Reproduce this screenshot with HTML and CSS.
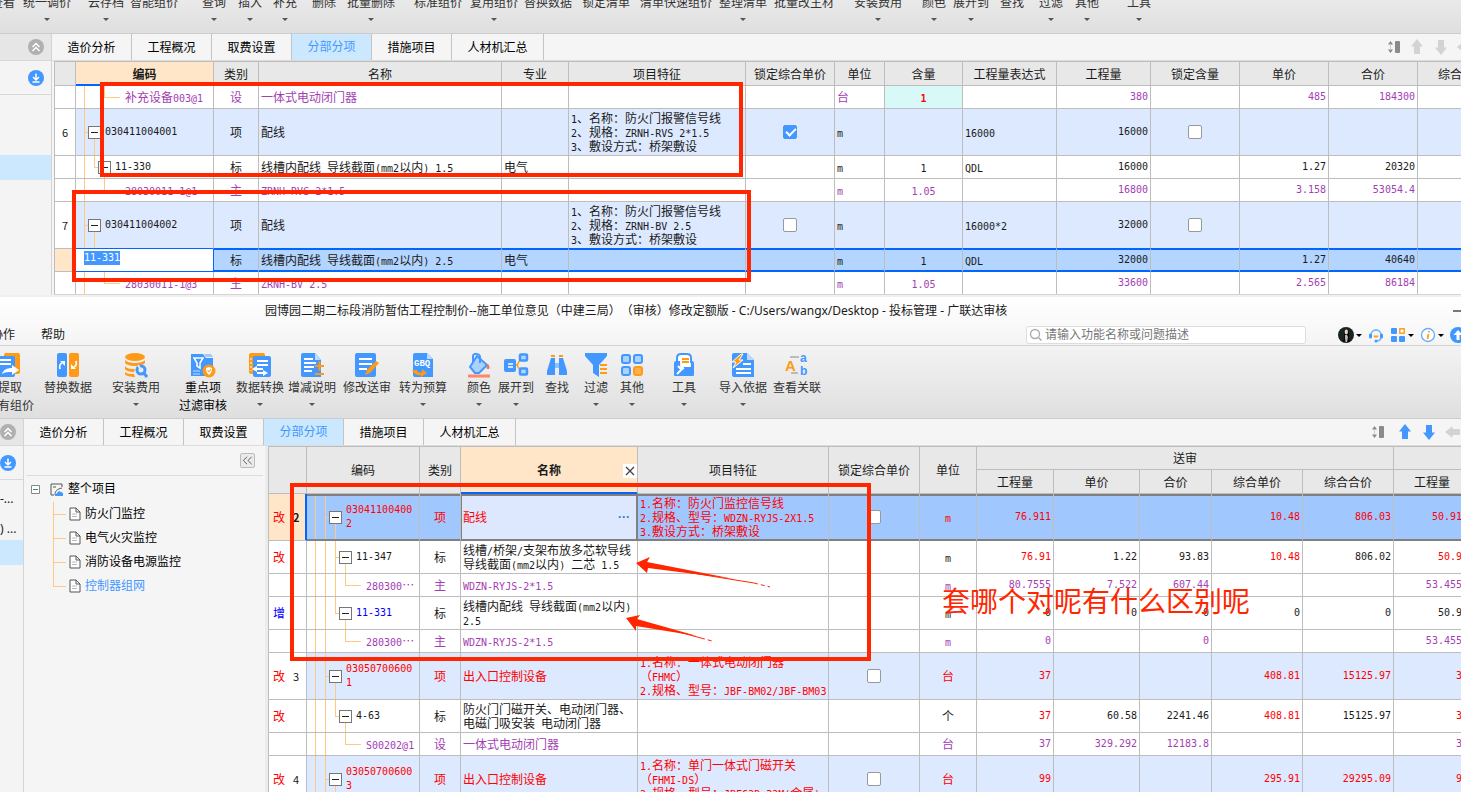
FILE: index.html
```html
<!DOCTYPE html>
<html lang="zh-CN">
<head>
<meta charset="utf-8">
<title>广联达审核</title>
<link rel="stylesheet" href="styles.css">
</head>
<body>
<svg class="defs" aria-hidden="true">
  <symbol id="up2" viewBox="0 0 16 16"><circle cx="8" cy="8" r="8" fill="#b0b0b0"/><path d="M4.500 8 8 4.500 11.500 8M4.500 12 8 8.500 11.500 12" fill="none" stroke="#fff" stroke-width="1.500"/></symbol>
  <symbol id="dl" viewBox="0 0 16 16"><circle cx="8" cy="8" r="8" fill="#4398ff"/><path d="M8 3.500v6M5 7l3 3 3-3M4.500 12h7" fill="none" stroke="#fff" stroke-width="1.500"/></symbol>
  <symbol id="space" viewBox="0 0 14 14"><path d="M3.500 1 6 4.500H1zM3.500 13 6 9.500H1z" fill="#888"/><path d="M3.500 4v6" stroke="#ccc"/><rect x="8" y="1" width="5" height="12" rx="1" fill="#8a8a8a"/></symbol>
  <symbol id="arrow" viewBox="0 0 16 16"><path d="M8 0 14 7.500 11 7.500V15H5V7.500L2 7.500z" fill="currentColor"/></symbol>
  <symbol id="doc" viewBox="0 0 12 14"><path d="M1 1h6l4 4v8H1z" fill="#fff" stroke="#555"/><path d="M7 1v4h4" fill="none" stroke="#555"/><path d="M3 7h5M3 9.500h5" stroke="#bbb"/></symbol>
</svg>

<section class="window">
  <nav class="ribbon ribbon-cut">
    <button>查看</button><button class="dd">统一调价</button><button class="dd">云存档</button><button>智能组价</button><button class="dd">查询</button><button class="dd">插入</button><button class="dd">补充</button><button>删除</button><button class="dd">批量删除</button><button>标准组价</button><button class="dd">复用组价</button><button>替换数据</button><button>锁定清单</button><button>清单快速组价</button><button class="dd">整理清单</button><button>批量改主材</button><button class="dd">安装费用</button><button class="dd">颜色</button><button class="dd">展开到</button><button>查找</button><button class="dd">过滤</button><button class="dd">其他</button><button class="dd">工具</button>
  </nav>
  <div class="work">
    <aside class="rail rail-wide">
      <button class="rail-head" aria-label="收起"><svg><use href="#up2"/></svg></button>
      <button class="rail-down" aria-label="下载"><svg><use href="#dl"/></svg></button>
      <div class="rail-sel"></div>
    </aside>
    <div class="main">
      <div class="tabs">
        <button>造价分析</button><button>工程概况</button><button>取费设置</button><button class="on">分部分项</button><button>措施项目</button><button class="last">人材机汇总</button>
        <div class="tools off"><svg class="sp"><use href="#space"/></svg><svg><use href="#arrow"/></svg><svg class="down"><use href="#arrow"/></svg><svg class="left"><use href="#arrow"/></svg></div>
      </div>
      <div class="sheet sheet-a">
        <table>
          <colgroup><col class="w21"><col class="w138"><col class="w45"><col class="w243"><col class="w67"><col class="w177"><col class="w89"><col class="w50"><col class="w78"><col class="w94"><col class="w94"><col class="w89"><col class="w89"><col class="w89"><col class="w89"></colgroup>
          <tr class="h24"><th></th><th class="act">编码</th><th>类别</th><th>名称</th><th>专业</th><th>项目特征</th><th>锁定综合单价</th><th>单位</th><th>含量</th><th>工程量表达式</th><th>工程量</th><th>锁定含量</th><th>单价</th><th>合价</th><th>综合单价</th></tr>
          <tr class="h23 pu"><td></td><td class="tree leaf">补充设备<code>003@1</code></td><td class="c">设</td><td>一体式电动闭门器</td><td></td><td></td><td></td><td>台</td><td class="c cyan"><code>1</code></td><td></td><td class="r">380</td><td></td><td class="r">485</td><td class="r">184300</td><td></td></tr>
          <tr class="h47 item"><td class="no">6</td><td class="tree top"><div><button class="box" aria-label="折叠"></button><code>030411004001</code></div></td><td class="c">项</td><td>配线</td><td></td><td><code>1</code>、名称：防火门报警信号线<br><code>2</code>、规格：<code>ZRNH-RVS 2*1.5</code><br><code>3</code>、敷设方式：桥架敷设</td><td class="c"><input type="checkbox" aria-label="锁定综合单价" checked></td><td><code>m</code></td><td></td><td><code>16000</code></td><td class="r">16000</td><td class="c"><input type="checkbox" aria-label="锁定含量"></td><td></td><td></td><td></td></tr>
          <tr class="h23"><td></td><td class="tree sub"><div><button class="box" aria-label="折叠"></button><code>11-330</code></div></td><td class="c">标</td><td>线槽内配线<code> </code>导线截面<code>(mm2</code>以内<code>) 1.5</code></td><td>电气</td><td></td><td></td><td><code>m</code></td><td class="c"><code>1</code></td><td><code>QDL</code></td><td class="r">16000</td><td></td><td class="r">1.27</td><td class="r">20320</td><td></td></tr>
          <tr class="h23 pu"><td></td><td class="tree leaf"><code>28030011-1@1</code></td><td class="c">主</td><td><code>ZRNH-RVS 2*1.5</code></td><td></td><td></td><td></td><td><code>m</code></td><td class="c"><code>1.05</code></td><td></td><td class="r">16800</td><td></td><td class="r">3.158</td><td class="r">53054.4</td><td></td></tr>
          <tr class="h47 item pre"><td class="no">7</td><td class="tree top"><div><button class="box" aria-label="折叠"></button><code>030411004002</code></div></td><td class="c">项</td><td>配线</td><td></td><td><code>1</code>、名称：防火门报警信号线<br><code>2</code>、规格：<code>ZRNH-BV 2.5</code><br><code>3</code>、敷设方式：桥架敷设</td><td class="c"><input type="checkbox" aria-label="锁定综合单价"></td><td><code>m</code></td><td></td><td><code>16000*2</code></td><td class="r">32000</td><td class="c"><input type="checkbox" aria-label="锁定含量"></td><td></td><td></td><td></td></tr>
          <tr class="h23 cur"><td class="mark"></td><td class="edit"><input type="text" value="11-331" aria-label="编码"></td><td class="c">标</td><td>线槽内配线<code> </code>导线截面<code>(mm2</code>以内<code>) 2.5</code></td><td>电气</td><td></td><td></td><td><code>m</code></td><td class="c"><code>1</code></td><td><code>QDL</code></td><td class="r">32000</td><td></td><td class="r">1.27</td><td class="r">40640</td><td></td></tr>
          <tr class="h22 pu"><td></td><td class="tree leaf"><code>28030011-1@3</code></td><td class="c">主</td><td><code>ZRNH-BV 2.5</code></td><td></td><td></td><td></td><td><code>m</code></td><td class="c"><code>1.05</code></td><td></td><td class="r">33600</td><td></td><td class="r">2.565</td><td class="r">86184</td><td></td></tr>
        </table>
      </div>
    </div>
  </div>
</section>

<section class="window second">
  <header class="title">
    <h1>园博园二期二标段消防暂估工程控制价--施工单位意见（中建三局）（审核）修改定额版 - C:/Users/wangx/Desktop - 投标管理 - 广联达审核</h1>
    <button class="min" aria-label="最小化"></button>
  </header>
  <div class="menu">
    <a href="#">协作</a><a href="#">帮助</a>
    <label class="search"><svg viewBox="0 0 14 14"><circle cx="6" cy="6" r="4.500" fill="none" stroke="#aaa" stroke-width="1.300"/><path d="m9.500 9.500 3 3" stroke="#aaa" stroke-width="1.500"/></svg><input type="text" placeholder="请输入功能名称或问题描述"></label>
    <div class="account">
      <button class="cr" aria-label="用户"><svg viewBox="0 0 16 16"><circle cx="8" cy="8" r="8" fill="#1c2421"/><path d="M6 5c0-3 5-3 5 0v5l1 5H5l1-5z" fill="#080a0a"/><ellipse cx="8.300" cy="5" rx="1.700" ry="2.400" fill="#e6d3c8"/><path d="M7 8h2l1 2-1 5H7.500L7 11z" fill="#bfb4ad"/></svg></button>
      <button aria-label="客服"><svg viewBox="0 0 16 16"><path d="M3 8a5 5 0 0 1 10 0M13 8v2c0 3-2 4-5 4" fill="none" stroke="#7dbbff" stroke-width="1.800"/><rect x="1" y="6.500" width="3" height="5" rx="1.500" fill="#4398ff"/><rect x="12" y="6.500" width="3" height="5" rx="1.500" fill="#4398ff"/><path d="M5.500 8.500h5c0 3-5 3-5 0z" fill="#ff9f1a"/><circle cx="8" cy="14" r="1.500" fill="#4398ff"/></svg></button>
      <button class="cr" aria-label="应用"><svg viewBox="0 0 16 16"><g fill="#4398ff"><rect x="1" y="1" width="6" height="6" rx="1"/><rect x="1" y="9" width="6" height="6" rx="1"/><rect x="9" y="9" width="6" height="6" rx="1"/></g><rect x="9.800" y="1.800" width="4.400" height="4.400" fill="#fff" stroke="#ff9f1a" stroke-width="1.500"/></svg></button>
      <button class="cr" aria-label="信息"><svg viewBox="0 0 16 16"><circle cx="8" cy="8" r="6.500" fill="#fff" stroke="#6aaeff" stroke-width="1.400"/><path d="M8.500 7 7.500 12M9 4l-.2 1.500" stroke="#ff9f1a" stroke-width="1.800"/></svg></button>
      <button aria-label="升级"><svg viewBox="0 0 16 16"><circle cx="8" cy="8" r="8" fill="#3f96ff"/><path d="M8 3 3.500 8H6.500v5h3V8h3z" fill="#fff"/></svg></button>
    </div>
  </div>
  <nav class="ribbon ribbon-full">
    <button><svg viewBox="0 0 24 24"><rect x="6" y="0" width="16" height="21" rx="2" fill="#ff9a16"/><rect x="-2" y="3" width="19" height="21" rx="2" fill="#4398ff"/><path d="M2 7h11M2 11h11" stroke="#fff" stroke-width="2"/><path d="M4 21c1-4 5-6 10-6v-3l7 5-7 5v-3c-4 0-7 0-10 2z" fill="#fff"/></svg><span>提取</span><span>已有组价</span></button>
    <button><svg viewBox="0 0 24 24"><rect x="1" width="10" height="24" rx="2" fill="#4398ff"/><rect x="13" width="10" height="24" rx="2" fill="#ff9a16"/><path d="M4 16c-1-4 0-5 2-6M20 8c1 4 0 5-2 6" fill="none" stroke="#fff" stroke-width="1.800"/><path d="m4 8 5 0 0 5zM20 16l-5 0 0-5z" fill="#fff"/></svg><span>替换数据</span></button>
    <button class="dd"><svg viewBox="0 0 24 24"><g fill="#ff9a16"><ellipse cx="11" cy="4" rx="10" ry="4"/><path d="M1 7c3 4 17 4 20 0v3c-3 4-17 4-20 0zM1 13c2 3 6 3 10 3l-1 3c-4 0-8-1-9-3zM1 19c2 2 5 2 9 2l1 3c-4 0-10-1-10-3z"/></g><circle cx="17" cy="17" r="4" fill="none" stroke="#4398ff" stroke-width="3"/><path d="m17 17-3-5" stroke="#e8e8e8" stroke-width="2"/><path d="m19 19 4 5" stroke="#4398ff" stroke-width="3"/></svg><span>安装费用</span></button>
    <button class="dark"><svg viewBox="0 0 24 24"><path d="M0 1h12l3 4h7v18H0z" fill="#4398ff"/><path d="M13 1h7l2 3h-7z" fill="#9bcbff"/><path d="M3 5h9L9 10v5l-3-2v-3z" fill="none" stroke="#fff" stroke-width="1.500"/><path d="M2 18h7M2 21h7" stroke="#bcdcff"/><circle cx="18" cy="18" r="6.500" fill="#ff9a16"/><path d="m18 14 3 1c0 4-1 5-3 7-2-2-3-3-3-7z" fill="#fff"/><path d="m16.500 17 1.500 2 2-3" fill="none" stroke="#ff9a16"/></svg><span>重点项</span><span>过滤审核</span></button>
    <button class="dd"><svg viewBox="0 0 24 24"><rect x="1" width="16" height="21" rx="2" fill="#ff9a16"/><rect x="5" y="3" width="18" height="21" rx="2" fill="#4398ff"/><path d="M3 5v13" stroke="#fff" stroke-dasharray="2 2"/><path d="M9 8h11M9 12h11" stroke="#fff" stroke-width="2"/><path d="m4 16 5-3v2h6v2H9v2zM20 20l-5-3v2H9v2h6v2z" fill="#fff"/></svg><span>数据转换</span></button>
    <button class="dd"><svg viewBox="0 0 24 24"><path d="M1 2a2 2 0 0 1 2-2h12l6 7v17H3a2 2 0 0 1-2-2z" fill="#4398ff"/><path d="M15 0v7h6z" fill="#b9dbff"/><path d="M4 6h9M4 10h12M4 14h10M4 18h8" stroke="#fff" stroke-width="1.800"/><path d="M15 13h9M19.500 8.500v9M15 21h9" stroke="#ff9a16" stroke-width="2"/></svg><span>增减说明</span></button>
    <button><svg viewBox="0 0 24 24"><rect width="21" height="24" rx="2" fill="#4398ff"/><path d="M4 6h13M4 11h13M4 16h8" stroke="#fff" stroke-width="2.200"/><path d="m12 17 9-9 3 2-9 10-5 2z" fill="#ff9a16"/></svg><span>修改送审</span></button>
    <button class="dd"><svg viewBox="0 0 24 24"><path d="M2 2a2 2 0 0 1 2-2h12l6 6v18H4a2 2 0 0 1-2-2z" fill="#4398ff"/><path d="M16 0v6h6z" fill="#b9dbff"/><text x="3" y="13" class="gbq">GBQ</text><path d="M1 17h5c1 3 3 3 5 2v-3l5 4-6 4v-2c-4 1-7-1-9-5z" fill="#ff9a16"/></svg><span>转为预算</span></button>
    <button class="dd"><svg viewBox="0 0 24 24"><path d="m10 3 10 9-8 8H8l-5-6z" fill="#a9d2ff" stroke="#4398ff" stroke-width="2"/><path d="M6 9V3c0-3 7-3 7 1v6" fill="none" stroke="#4398ff" stroke-width="2"/><path d="M21 11c2 3 2 5 0 5s-2-2 0-5z" fill="#ff7052"/><path d="M1 23h22" stroke="#ff8668" stroke-width="3"/></svg><span>颜色</span></button>
    <button class="dd"><svg viewBox="0 0 24 24"><path d="M10 12h3l4-7M13 12l4 7" fill="none" stroke="#ff9a16" stroke-width="1.500"/><rect x="0" y="6" width="12" height="13" rx="2" fill="#4398ff"/><path d="M4 11h5M4 14h5" stroke="#fff" stroke-width="1.500"/><g fill="#b4d7ff" stroke="#4398ff" stroke-width="2.500"><rect x="16" y="1.500" width="7" height="6" rx="1"/><rect x="16" y="15.500" width="7" height="6" rx="1"/></g></svg><span>展开到</span></button>
    <button><svg viewBox="0 0 24 24"><path d="M6 3h4M14 3h4" stroke="#ff9a16" stroke-width="2"/><path d="M6 5h4v17H2v-4zM14 5h4l4 13v4h-8z" fill="#4398ff"/><path d="M10 10h4v5h-4z" fill="#8fc3ff"/></svg><span>查找</span></button>
    <button class="dd"><svg viewBox="0 0 24 24"><path d="M1 0h22v3l-8 9v12l-6-4v-8L1 3z" fill="#4398ff"/><path d="M16 12h7M16 16h7M16 20h7" stroke="#ff9a16" stroke-width="2"/></svg><span>过滤</span></button>
    <button class="dd"><svg viewBox="0 0 24 24"><g fill="#a9d2ff" stroke="#4398ff" stroke-width="2"><rect x="2" y="2" width="8" height="8" rx="2"/><rect x="14" y="2" width="8" height="8" rx="2"/><rect x="2" y="14" width="8" height="8" rx="2"/></g><rect x="14" y="14" width="8" height="8" rx="2" fill="#ffb04d" stroke="#ff9a16" stroke-width="2"/></svg><span>其他</span></button>
    <button class="dd"><svg viewBox="0 0 24 24"><path d="M5 9V5q0-4 4-4h6q4 0 4 4v5" fill="#fff" stroke="#4398ff" stroke-width="2"/><path d="M4 8h4v6h11v-6h1q2 0 2 2v12q0 1-1 1H3q-1 0-1-1V10q0-2 2-2z" fill="#4398ff"/><path d="M9 4h9v10H9z" fill="#fff"/><path d="M10 6h7M10 9h7" stroke="#ff9a16" stroke-width="1.800"/><path d="M10 12v4l-5 5M6 13l3 3 3-1" stroke="#fff" stroke-width="2" fill="none"/></svg><span>工具</span></button>
    <button class="dd"><svg viewBox="0 0 24 24"><path d="M1 2a2 2 0 0 1 2-2h13l7 7v17H3a2 2 0 0 1-2-2z" fill="#4398ff"/><path d="M16 0v7h7z" fill="#b9dbff"/><path d="M12 11h8M5 16h15M5 20h15" stroke="#fff" stroke-width="2"/><path d="m10 1-9 8h4l-3 6 10-8H8l4-6z" fill="#ff9a16" stroke="#fff"/></svg><span>导入依据</span></button>
    <button><svg viewBox="0 0 24 24"><text x="0" y="18" class="la">A</text><text x="15" y="9" class="lb">a</text><text x="15" y="22" class="lb">b</text><path d="M6 5V4h8M6 20h7" fill="none" stroke="#aaa" stroke-width="1.500"/></svg><span>查看关联</span></button>
  </nav>
  <div class="work">
    <aside class="rail rail-thin">
      <button class="rail-head" aria-label="收起"><svg><use href="#up2"/></svg></button>
      <button class="rail-down" aria-label="下载"><svg><use href="#dl"/></svg></button>
      <div class="rail-item">-...</div><div class="rail-item">) ...</div>
      <div class="rail-sel"></div>
    </aside>
    <div class="main">
      <div class="tabs">
        <button>造价分析</button><button>工程概况</button><button>取费设置</button><button class="on">分部分项</button><button>措施项目</button><button class="last">人材机汇总</button>
        <div class="tools live"><svg class="sp"><use href="#space"/></svg><svg><use href="#arrow"/></svg><svg class="down"><use href="#arrow"/></svg><svg class="left dim"><use href="#arrow"/></svg></div>
      </div>
      <div class="split">
        <div class="outline">
          <div class="outline-bar"><button aria-label="收起目录"><svg viewBox="0 0 14 14"><path d="m6.500 3-4 4 4 4M11.500 3l-4 4 4 4" fill="none" stroke="#555"/></svg></button></div>
          <div class="root"><svg class="pm" viewBox="0 0 9 9"><path d="M.5.500h8v8h-8z" fill="#fff" stroke="#888"/><path d="M2 4.500h5" stroke="#389"/></svg><svg class="pj" viewBox="0 0 13 13"><path d="M12 4V1H1v11h3M3 4h3M5 12c0-4 2-6 7-7" fill="none" stroke="#555"/><path d="m5 12 4-4 4 2v3H5z" fill="#4398ff"/></svg><a href="#">整个项目</a></div>
          <ul>
            <li><svg><use href="#doc"/></svg><a href="#">防火门监控</a></li>
            <li><svg><use href="#doc"/></svg><a href="#">电气火灾监控</a></li>
            <li><svg><use href="#doc"/></svg><a href="#">消防设备电源监控</a></li>
            <li><svg><use href="#doc"/></svg><a href="#" class="on">控制器组网</a></li>
          </ul>
        </div>
        <div class="sheet sheet-b">
          <table>
            <colgroup><col class="w38"><col class="w113"><col class="w41"><col class="w177"><col class="w191"><col class="w91"><col class="w57"><col class="w77"><col class="w86"><col class="w72"><col class="w91"><col class="w91"><col class="w77"><col class="w86"></colgroup>
            <tr class="h23"><th rowspan="2"></th><th rowspan="2">编码</th><th rowspan="2">类别</th><th rowspan="2" class="act">名称<button aria-label="关闭"><svg viewBox="0 0 14 14"><path d="m3 3 8 8M11 3l-8 8" stroke="#444" stroke-width="1.300"/></svg></button></th><th rowspan="2">项目特征</th><th rowspan="2">锁定综合单价</th><th rowspan="2">单位</th><th colspan="5">送审</th><th colspan="2"></th></tr>
            <tr class="h24"><th>工程量</th><th>单价</th><th>合价</th><th>综合单价</th><th>综合合价</th><th>工程量</th><th>单价</th></tr>
            <tr class="h47 pick red"><td class="no mark"><div>改<b>2</b></div></td><td class="tree top"><div><button class="box" aria-label="折叠"></button><code>03041100400<br>2</code></div></td><td class="c">项</td><td class="cell"><div>配线<button aria-label="更多">···</button></div></td><td><code>1.</code>名称：防火门监控信号线<br><code>2.</code>规格、型号：<code>WDZN-RYJS-2X1.5</code><br><code>3.</code>敷设方式：桥架敷设</td><td class="c"><input type="checkbox" aria-label="锁定综合单价"></td><td class="c"><code>m</code></td><td class="r">76.911</td><td></td><td></td><td class="r">10.48</td><td class="r">806.03</td><td class="r">50.911</td><td></td></tr>
            <tr class="h33"><td class="no"><div class="rd">改</div></td><td class="tree sub cont"><div><button class="box" aria-label="折叠"></button><code>11-347</code></div></td><td class="c">标</td><td>线槽<code>/</code>桥架<code>/</code>支架布放多芯软导线<br>导线截面<code>(mm2</code>以内<code>) </code>二芯<code> 1.5</code></td><td></td><td></td><td class="c"><code>m</code></td><td class="r rd">76.91</td><td class="r">1.22</td><td class="r">93.83</td><td class="r rd">10.48</td><td class="r">806.02</td><td class="r rd">50.91</td><td></td></tr>
            <tr class="h23 pu"><td></td><td class="tree leaf cont"><code>280300</code>⋯</td><td class="c">主</td><td><code>WDZN-RYJS-2*1.5</code></td><td></td><td></td><td class="c"><code>m</code></td><td class="r">80.7555</td><td class="r">7.522</td><td class="r">607.44</td><td></td><td></td><td class="r">53.4555</td><td></td></tr>
            <tr class="h33"><td class="no"><div class="bl">增</div></td><td class="tree sub"><div><button class="box" aria-label="折叠"></button><code class="bl">11-331</code></div></td><td class="c">标</td><td>线槽内配线<code> </code>导线截面<code>(mm2</code>以内<code>)</code><br><code>2.5</code></td><td></td><td></td><td class="c"><code>m</code></td><td class="r">0</td><td class="r">0</td><td class="r">0</td><td class="r">0</td><td class="r">0</td><td class="r">50.91</td><td></td></tr>
            <tr class="h23 pu"><td></td><td class="tree leaf"><code>280300</code>⋯</td><td class="c">主</td><td><code>WDZN-RYJS-2*1.5</code></td><td></td><td></td><td class="c"><code>m</code></td><td class="r">0</td><td></td><td class="r">0</td><td></td><td></td><td class="r">53.4555</td><td></td></tr>
            <tr class="h47 item red"><td class="no"><div>改<b>3</b></div></td><td class="tree top"><div><button class="box" aria-label="折叠"></button><code>03050700600<br>1</code></div></td><td class="c">项</td><td>出入口控制设备</td><td><code>1.</code>名称：一体式电动闭门器<br>（<code>FHMC</code>）<br><code>2.</code>规格、型号：<code>JBF-BM02/JBF-BM03</code></td><td class="c"><input type="checkbox" aria-label="锁定综合单价"></td><td class="c">台</td><td class="r">37</td><td></td><td></td><td class="r">408.81</td><td class="r">15125.97</td><td class="r">37</td><td></td></tr>
            <tr class="h33"><td class="no"><div class="rd">改</div></td><td class="tree sub"><div><button class="box" aria-label="折叠"></button><code>4-63</code></div></td><td class="c">标</td><td>防火门门磁开关、电动闭门器、<br>电磁门吸安装<code> </code>电动闭门器</td><td></td><td></td><td class="c">个</td><td class="r rd">37</td><td class="r">60.58</td><td class="r">2241.46</td><td class="r rd">408.81</td><td class="r">15125.97</td><td class="r rd">37</td><td></td></tr>
            <tr class="h23 pu"><td></td><td class="tree leaf"><code>S00202@1</code></td><td class="c">设</td><td>一体式电动闭门器</td><td></td><td></td><td class="c">台</td><td class="r">37</td><td class="r">329.292</td><td class="r">12183.8</td><td></td><td></td><td class="r">37</td><td></td></tr>
            <tr class="h47 item red"><td class="no"><div>改<b>4</b></div></td><td class="tree top"><div><button class="box" aria-label="折叠"></button><code>03050700600<br>3</code></div></td><td class="c">项</td><td>出入口控制设备</td><td><code>1.</code>名称：单门一体式门磁开关<br>（<code>FHMI-DS</code>）<br><code>2.</code>规格、型号：<code>JBF62D-32M(</code>金属<code>)</code></td><td class="c"><input type="checkbox" aria-label="锁定综合单价"></td><td class="c">台</td><td class="r">99</td><td></td><td></td><td class="r">295.91</td><td class="r">29295.09</td><td class="r">99</td><td></td></tr>
          </table>
        </div>
      </div>
    </div>
  </div>
</section>

<div class="note note-a"></div>
<div class="note note-b"></div>
<div class="note note-c"></div>
<svg class="pointers" viewBox="0 0 150 90" aria-hidden="true">
  <g fill="#ff2600"><path d="M10 8 24 2l-3 5L108 24 22 13l-1 5z"/><path d="M0 63 14 60l-3 4 60 17L10 71l0 5z"/></g>
  <path d="m60 17 68 11M45 75l30 8" stroke="#ff2600"/>
  <path d="m128 28 16 4M75 83l11 3" stroke="#ff2600" stroke-dasharray="4 3"/>
</svg>
<p class="remark">套哪个对呢有什么区别呢</p>
</body>
</html>
```
FILE: styles.css
```css
* { box-sizing: border-box; }
body {
  margin: 0; position: relative; height: 100vh; overflow: hidden;
  display: flex; flex-direction: column;
  background: #f5f5f5; color: #1a1a1a;
  font: 12px/14px "Noto Sans", "Noto Sans CJK SC", sans-serif;
  text-spacing-trim: space-all;
}
button { border: 0; padding: 0; margin: 0; background: none; font: inherit; color: inherit; }
a { color: inherit; text-decoration: none; }
svg { display: block; flex: none; }
.defs { position: absolute; width: 0; height: 0; }
.window { display: flex; flex-direction: column; flex: none; }
.second { flex: 1; min-height: 0; border-top: 2px solid #f0f0f0; }

/* ribbons */
.ribbon {
  display: grid; flex: none; align-items: start; overflow: hidden; color: #333;
  background: linear-gradient(#f3f3f3, #dfdfdf); border-bottom: 1px solid #ccc;
}
.ribbon button { display: flex; flex-direction: column; align-items: center; justify-self: start; white-space: nowrap; }
.dd::after {
  content: ""; margin-top: 8px;
  border: 3px solid transparent; border-top-color: #555; border-bottom: 0;
}
.ribbon-cut {
  height: 34px; background: linear-gradient(#e9e9e9, #dfdfdf);
  grid-template-columns: 23px 65px 42px 72px 36px 35px 39px 35px 67px 56px 54px 58px 58px 79px 55px 80px 68px 31px 47px 39px 36px 52px 1fr;
}
.ribbon-cut button { margin-top: -4px; }
.ribbon-cut button:first-child { margin-left: -9px; }
.ribbon-full {
  height: 73px; padding-top: 7px;
  grid-template-columns: 44px 68px 67px 57px 52px 55px 56px 68px 31px 47px 39px 36px 52px 47px 54px 1fr;
}
.ribbon-full button:first-child { margin-left: -14px; }
.ribbon-full svg { width: 24px; height: 24px; margin-bottom: 4px; overflow: visible; }
.ribbon-full span + span { margin-top: 4px; }
.ribbon-full .dark { color: #000; }
.gbq { font: bold 9px "Liberation Mono", monospace; fill: #fff; }
.la { font: bold 15px "Liberation Sans", sans-serif; fill: #ff9a16; }
.lb { font: bold 12px "Liberation Sans", sans-serif; fill: #4398ff; }

/* title and menu */
.title { display: flex; flex: none; justify-content: space-between; align-items: center; height: 28px; padding-left: 265px; background: linear-gradient(#fff, #f9f9f9); }
.title h1 { margin: 0; font-size: 12px; font-weight: 400; white-space: nowrap; }
.min { width: 8px; height: 2px; background: #777; }
.menu { display: flex; flex: none; align-items: center; gap: 26px; height: 21px; background: linear-gradient(#f9f9f9, #f4f4f4); border-bottom: 1px solid #d4d4d4; overflow: hidden; }
.menu a:first-child { margin-left: -9px; }
.search { display: flex; align-items: center; gap: 2px; width: 280px; height: 18px; margin-left: auto; padding: 0 2px; border: 1px solid #ddd; border-radius: 3px; background: #fff; }
.search svg { width: 14px; height: 14px; }
.search input { flex: 1; border: 0; padding: 0; outline: 0; background: none; font: inherit; }
.search input::placeholder { color: #777; opacity: 1; }
.account { display: flex; gap: 6px; margin: 0 -5px 0 6px; }
.account button { display: flex; align-items: center; gap: 2px; }
.account svg { width: 16px; height: 16px; }
.cr::after { content: ""; border: 3px solid transparent; border-top-color: #000; border-bottom: 0; }

/* side rail */
.work { display: flex; flex: 1; min-height: 0; }
.rail { flex: none; display: flex; flex-direction: column; background: #f4f4f4; border-right: 1px solid #d4d4d4; }
.rail-wide { width: 52px; }
.rail-thin { width: 24px; }
.rail button { display: flex; justify-content: flex-end; align-items: center; padding-right: 7px; }
.rail svg { width: 16px; height: 16px; }
.rail-head { height: 27px; background: #e6e6e6; border-bottom: 1px solid #d8d8d8; }
.rail-down { height: 34px; border-bottom: 1px solid #d8d8d8; }
.rail-sel { height: 25px; background: #cce8ff; }
.rail-wide .rail-sel { margin-top: 60px; }
.rail-item { height: 30px; line-height: 38px; overflow: hidden; }

/* tabs */
.main { flex: 1; min-width: 0; display: flex; flex-direction: column; }
.tabs { display: flex; flex: none; height: 27px; border-bottom: 1px solid #dcdcdc; color: #000; }
.tabs > button { width: 80px; padding-top: 2px; border-right: 1px solid #c4c4c4; }
.tabs .last { width: 92px; }
.tabs .on { background: #cce8ff; color: #4398ff; padding: 0; }
.tools { display: flex; align-items: center; margin-left: auto; gap: 8px; overflow: hidden; }
.tools svg { width: 16px; height: 16px; }
.tools .sp { width: 14px; height: 14px; margin-right: 4px; }
.off { color: #d3d3d3; margin-right: -13px; }
.off .sp { margin-right: 0; margin-left: 4px; }
.off { margin-right: -12px; }
.live { color: #4398ff; }
.dim { color: #d3d3d3; }
.down { transform: rotate(180deg); }
.left { transform: rotate(-90deg); }

/* outline */
.split { display: flex; flex: 1; min-height: 0; }
.outline { flex: none; width: 244px; color: #000; border-right: 3px solid #ececec; }
.outline-bar { display: flex; justify-content: flex-end; align-items: center; height: 30px; margin: 0 2px; padding-right: 8px; border-bottom: 1px solid #dcdcdc; }
.outline-bar button { width: 15px; height: 15px; border: 1px solid #bbb; border-radius: 2px; background: #eaeaea; }
.root { display: flex; align-items: center; height: 26px; padding-left: 7px; }
.pm { width: 9px; height: 9px; margin-right: 10px; }
.pj { width: 13px; height: 13px; margin-right: 5px; }
.outline ul { list-style: none; margin: 0 0 0 29px; padding: 0; }
.outline li {
  display: flex; align-items: center; gap: 4px; height: 24px; padding-left: 16px;
  background: linear-gradient(#ffc97f, #ffc97f) 0 0 / 1px 100% no-repeat, linear-gradient(#ffc97f, #ffc97f) 0 50% / 13px 1px no-repeat;
}
.outline li:last-child { background-size: 1px 50%, 13px 1px; }
.outline li svg { width: 12px; height: 14px; }
.outline .on { color: #4398ff; }

/* sheets */
.sheet { overflow: hidden; flex: 1; min-width: 0; }
.sheet-a { margin-left: 2px; border-bottom: 1px solid #d4d4d4; }
table { table-layout: fixed; width: 0; border-collapse: separate; border-spacing: 0; border: solid #bdbdbd; border-width: 1px 0 0 1px; background: #fff; }
th, td { padding: 0 2px; border: solid #bdbdbd; border-width: 0 1px 1px 0; white-space: nowrap; overflow: hidden; text-align: left; font-family: "Noto Sans CJK SC", sans-serif; line-height: 14px; }
th { background: #e8e8e8; text-align: center; font-weight: 400; padding: 0; }
th.act { background: #ffe6c8; font-weight: 700; border-bottom-color: #06f; box-shadow: inset 0 -1px #06f; position: relative; }
th.act button { position: absolute; right: 0; top: 17px; width: 14px; height: 14px; background: #fff; }
code, td.r { font-family: "DejaVu Sans Mono", monospace; font-size: 10px; }
code { white-space: pre; line-height: 0; }
.tree div code { line-height: 14px; }
td.r { text-align: right; }
.c { text-align: center; }
.h22 { height: 22px; } .h23 { height: 23px; } .h24 { height: 24px; } .h33 { height: 33px; } .h47 { height: 47px; }
.w21 { width: 21px; } .w38 { width: 38px; } .w41 { width: 41px; } .w45 { width: 45px; } .w50 { width: 50px; } .w57 { width: 57px; }
.w67 { width: 67px; } .w72 { width: 72px; } .w77 { width: 77px; } .w78 { width: 78px; } .w86 { width: 86px; } .w89 { width: 89px; }
.w91 { width: 91px; } .w94 { width: 94px; } .w113 { width: 113px; } .w138 { width: 138px; } .w177 { width: 177px; } .w191 { width: 191px; } .w243 { width: 243px; }
.pu { color: #a33eb3; }
.red, .rd { color: #f00; }
.bl { color: #00f; }
.item { background: #dde9fe; }
.item td:first-child { background: #fff; }
.cyan { background: #d9f8f8; color: #f00; font-weight: 700; }
.no { text-align: center; padding: 0; font-size: 11px; }
.no div { display: flex; gap: 8px; padding-left: 4px; font-size: 12px; }
.no b { font-weight: 400; font-size: 11px; color: #1a1a1a; }
td.mark, .item td.mark { background: #ffe6c8; }
.mark b { font-weight: 700; }
.sheet-a .h22 td { border-bottom: 0; }

/* tree column */
.tree {
  --r: 8px; --o: linear-gradient(#ffc97f, #ffc97f);
  padding: 0; background-repeat: no-repeat;
  background-image: var(--o), var(--o), var(--o), var(--o), var(--o);
}
.sheet-b .tree { --r: 18px; }
.top {
  background-position: 8px 0, var(--r) 0, var(--r) 50%, calc(var(--r) + 10px) 100%, 0 0;
  background-size: 1px 100%, 1px 100%, 4px 1px, 1px 50%, 0 0;
}
.sub {
  background-position: 8px 0, var(--r) 0, calc(var(--r) + 10px) 50%, calc(var(--r) + 20px) 100%, calc(var(--r) + 10px) 0;
  background-size: 1px 100%, 1px 100%, 4px 1px, 1px 50%, 1px 50%;
}
.leaf {
  background-position: 8px 0, var(--r) 0, calc(var(--r) + 20px) 50%, calc(var(--r) + 20px) 0, calc(var(--r) + 10px) 0;
  background-size: 1px 100%, 1px 100%, 16px 1px, 1px 50%, 0 0;
}
.sub.cont { background-size: 1px 100%, 1px 100%, 4px 1px, 1px 50%, 1px 100%; }
.leaf.cont { background-size: 1px 100%, 1px 100%, 16px 1px, 1px 50%, 1px 100%; }
.tree div { display: flex; align-items: center; gap: 4px; }
.top div { padding-left: calc(var(--r) + 4px); }
.sub div { padding-left: calc(var(--r) + 14px); }
.leaf { padding-left: calc(var(--r) + 41px); }
.box { flex: none; width: 13px; height: 13px; border: 1px solid #777; background: linear-gradient(#222, #222) 50% 50% / 7px 1px no-repeat #fff; }

/* current rows */
.pre td:nth-child(n+2) { border-bottom-color: #06f; }
.cur td:nth-child(n+3) { background: #b3d5ff; border-bottom-color: #06f; box-shadow: inset 0 1px #06f, inset 0 -1px #06f; }
.cur .edit { background: #fff; border-bottom-color: #06f; border-right-color: #06f; vertical-align: top; padding: 2px 0 0 8px; }
.edit input { display: block; width: 36px; height: 14px; border: 0; padding: 0; background: #4398ff; color: #fff; font: 10px/14px "DejaVu Sans Mono", monospace; }
.pick td:nth-child(n+2) { background-color: #a0c8ff; border-bottom-color: #808080; box-shadow: inset 0 2px #808080, inset 0 -1px #808080; }
.pick .mark { border-right-color: #06f; box-shadow: inset -1px 0 #06f; }
.pick td.cell { background-color: #dde8ff; border-right-color: #808080; box-shadow: inset 0 2px #808080, inset 1px 0 #808080, inset -1px 0 #808080, inset 0 -1px #808080; }
.cell div { display: flex; justify-content: space-between; padding-right: 5px; }
.cell button { color: #2b80d0; font: bold 12px/14px "Liberation Sans", sans-serif; }

input[type="checkbox"] { appearance: none; display: block; width: 14px; height: 14px; margin: 0 auto; border: 1px solid #999; border-radius: 2px; background: #fff; }
input[type="checkbox"]:checked { border-color: #4398ff; background: #4398ff; }
input[type="checkbox"]:checked::before { content: ""; display: block; width: 8px; height: 4px; margin: 2px; border: solid #fff; border-width: 0 0 2px 2px; transform: rotate(-45deg); }

/* markup drawn over both windows */
.note { position: absolute; border: 4px solid #ff2600; }
.note-a { left: 100px; top: 82px; width: 643px; height: 95px; }
.note-b { left: 72px; top: 190px; width: 679px; height: 92px; }
.note-c { left: 290px; top: 483px; width: 581px; height: 178px; }
.pointers { position: absolute; left: 626px; top: 555px; width: 150px; height: 90px; }
.remark { position: absolute; left: 942px; top: 584px; margin: 0; font-size: 28px; line-height: 34px; color: #ff2600; white-space: nowrap; }
```
